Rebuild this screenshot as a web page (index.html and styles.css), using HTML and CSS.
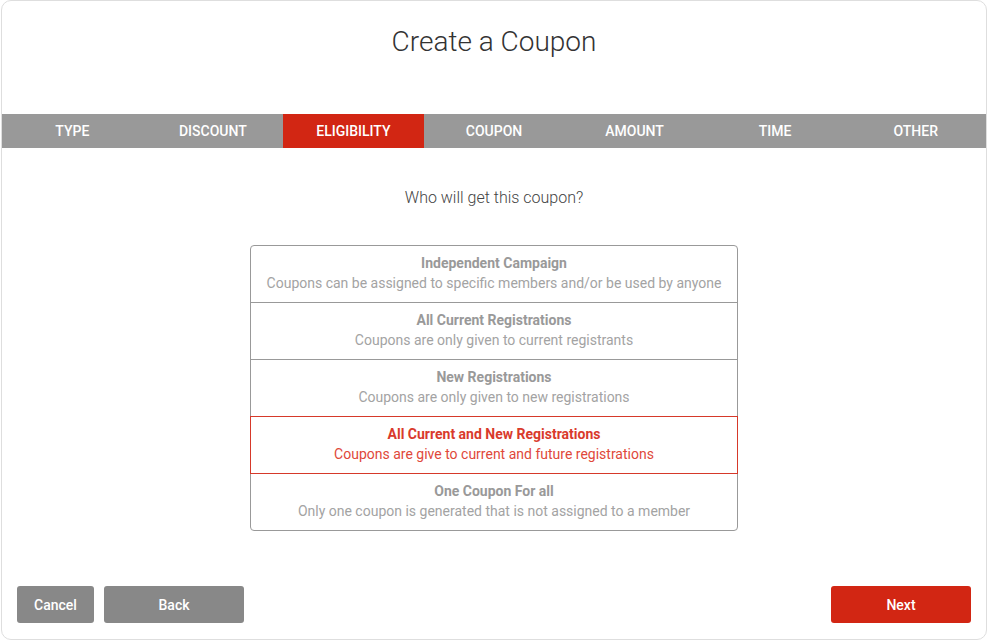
FILE: index.html
```html
<!DOCTYPE html>
<html>
<head>
<meta charset="utf-8">
<link rel="stylesheet" href="styles.css">
</head>
<body>
<div class="card">
  <h1 class="title">Create a Coupon</h1>
  <nav class="tabs">
    <div class="tab">TYPE</div>
    <div class="tab">DISCOUNT</div>
    <div class="tab active">ELIGIBILITY</div>
    <div class="tab">COUPON</div>
    <div class="tab">AMOUNT</div>
    <div class="tab">TIME</div>
    <div class="tab">OTHER</div>
  </nav>
  <p class="question">Who will get this coupon?</p>
  <div class="options">
    <div class="option">
      <div class="opt-title">Independent Campaign</div>
      <div class="opt-desc">Coupons can be assigned to specific members and/or be used by anyone</div>
    </div>
    <div class="option">
      <div class="opt-title">All Current Registrations</div>
      <div class="opt-desc">Coupons are only given to current registrants</div>
    </div>
    <div class="option">
      <div class="opt-title">New Registrations</div>
      <div class="opt-desc">Coupons are only given to new registrations</div>
    </div>
    <div class="option selected">
      <div class="opt-title">All Current and New Registrations</div>
      <div class="opt-desc">Coupons are give to current and future registrations</div>
    </div>
    <div class="option">
      <div class="opt-title">One Coupon For all</div>
      <div class="opt-desc">Only one coupon is generated that is not assigned to a member</div>
    </div>
  </div>
  <div class="footer">
    <button class="btn btn-cancel">Cancel</button>
    <button class="btn btn-back">Back</button>
    <button class="btn btn-next">Next</button>
  </div>
</div>
</body>
</html>
```
FILE: styles.css
```css
* { box-sizing: border-box; }
html, body { margin: 0; padding: 0; background: #fff; }
body { font-family: Roboto, "Liberation Sans", sans-serif; }

.card {
  margin-left: 1px;
  width: 986px;
  height: 640px;
  border: 1px solid #dedede;
  border-radius: 10px;
  display: flex;
  flex-direction: column;
  background: #fff;
}

.title {
  margin: 0;
  padding-top: 25px;
  height: 113px;
  font-weight: 300;
  font-size: 28px;
  line-height: 32px;
  color: #333;
  text-align: center;
}

.tabs {
  display: grid;
  grid-template-columns: repeat(7, 1fr);
  height: 34px;
  background: #999;
}
.tab {
  display: flex;
  align-items: center;
  justify-content: center;
  color: #fff;
  font-size: 14px;
  font-weight: 500;
}
.tab.active { background: #d22613; }

.question {
  margin: 40px 0 0;
  text-align: center;
  font-size: 16px;
  font-weight: 300;
  line-height: 20px;
  color: #444;
}

.options {
  align-self: center;
  width: 488px;
  margin-top: 37px;
  display: flex;
  flex-direction: column;
}
.option {
  position: relative;
  height: 58px;
  margin-top: -1px;
  border: 1px solid #999;
  text-align: center;
  padding-top: 7px;
  font-size: 14px;
  line-height: 20px;
  color: #a3a3a3;
}
.option:first-child { margin-top: 0; border-radius: 4px 4px 0 0; }
.option:last-child { border-radius: 0 0 4px 4px; }
.opt-title { font-weight: 700; color: #999; }
.option.selected {
  z-index: 1;
  border-color: #d6392a;
  color: #e0483a;
}
.option.selected .opt-title { color: #d93a2c; }

.footer {
  margin-top: auto;
  display: flex;
  gap: 10px;
  padding: 0 15px 16px 15px;
}
.btn {
  height: 37px;
  border: none;
  border-radius: 3px;
  font-family: Roboto, "Liberation Sans", sans-serif;
  font-size: 14px;
  font-weight: 500;
  color: #fff;
}
.btn-cancel { width: 77px; background: #888; }
.btn-back { width: 140px; background: #888; }
.btn-next { width: 140px; background: #d22613; margin-left: auto; }
```
